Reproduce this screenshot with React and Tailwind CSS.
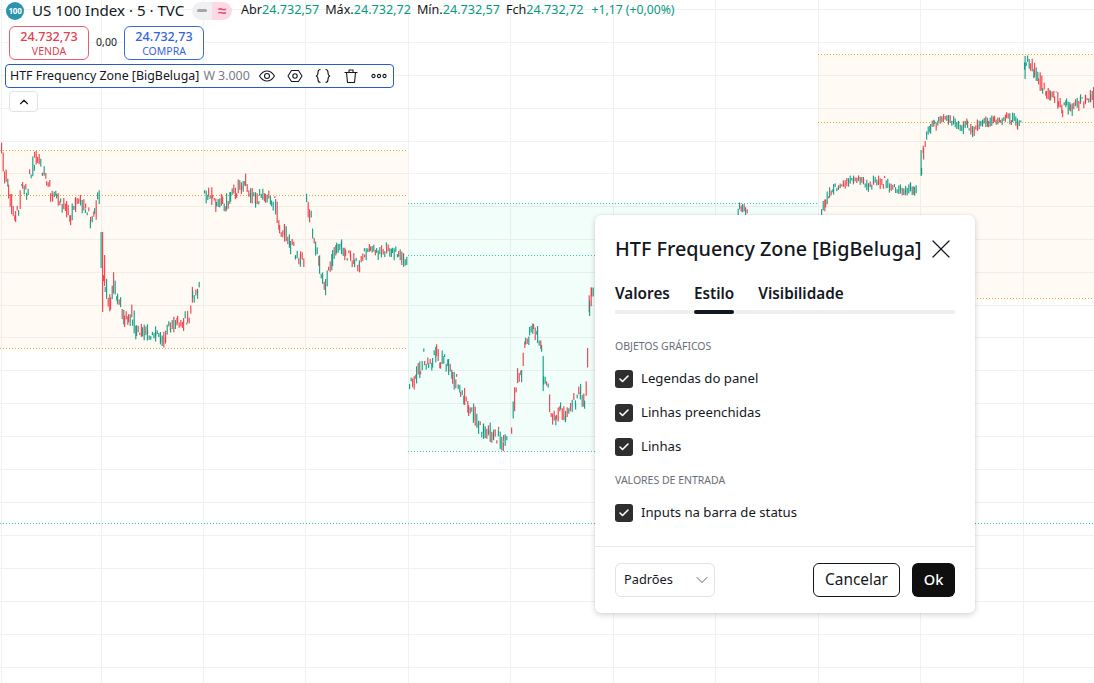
import React from 'react';
import { Check, ChevronDown, ChevronUp, X } from 'lucide-react';

const GREEN = '#089981';
const RED = '#f23645';

// price track for each session: [x, y] in screen pixels, gaps are where a new session opens
const sessions = [
  { amp: 11, track: [[1,156],[4,172],[8,192],[11,203],[15,216],[18,212],[22,186],[26,192],[29,178],[34,160],[37,157],[42,172],[46,182],[50,190],[52,200],[56,197],[60,202],[66,208],[70,216],[75,206],[80,200],[85,210],[90,219],[94,215],[97,202],[99,194]] },
  { amp: 14, track: [[103,272],[106,288],[110,300],[113,278],[117,298],[120,308],[124,318],[128,322],[132,314],[136,334],[142,331],[147,332],[155,334],[160,336],[165,340],[170,326],[177,323],[183,322],[187,318],[192,296],[197,290],[200,283]] },
  { amp: 13, track: [[204,195],[208,192],[212,198],[216,202],[222,198],[226,204],[230,194],[236,190],[241,186],[245,184],[250,196],[255,200],[259,195],[265,194],[271,200],[275,206],[279,222],[284,232],[290,244],[295,256],[300,258],[304,260]] },
  { amp: 10, track: [[306,200],[309,212],[312,228],[315,246],[319,262],[322,276],[325,286],[328,268],[332,260],[336,248],[341,246],[345,254],[350,258],[354,262],[359,266],[364,254],[370,250],[376,252],[381,250],[386,248],[392,252],[398,254],[403,258],[407,262]] },
  { amp: 15, track: [[409,388],[412,380],[416,378],[420,366],[424,356],[428,362],[432,364],[436,354],[440,358],[444,354],[448,370],[452,376],[456,380],[460,386],[464,396],[468,408],[473,414],[478,424],[483,432],[488,430],[493,436],[498,436],[503,442],[507,440]] },
  { amp: 11, track: [[511,420],[514,398],[517,376],[521,372],[525,345],[529,330],[533,328],[537,334],[541,342],[543,378],[546,388],[549,402],[552,416],[556,420],[560,408],[565,416],[570,404],[575,400],[580,394],[584,402],[587,350],[589,305],[591,292],[593,282]] },
  { amp: 6, track: [[736,214],[739,208],[742,207],[745,210],[748,214]] },
  { amp: 8, track: [[821,208],[825,202],[829,192],[833,190],[838,186],[843,184],[848,182],[853,178],[858,180],[863,183],[868,186],[873,181],[878,182],[884,182],[889,187],[895,188],[900,190],[905,190],[910,187],[914,188],[917,197]] },
  { amp: 7, track: [[921,165],[923,150],[926,136],[930,128],[934,124],[938,120],[943,118],[948,120],[953,122],[958,126],[963,128],[967,124],[972,130],[977,125],[982,122],[988,122],[994,120],[1000,120],[1006,117],[1012,118],[1017,122],[1021,126]] },
  { amp: 10, track: [[1024,66],[1027,62],[1030,64],[1034,70],[1038,76],[1042,86],[1046,90],[1050,95],[1054,96],[1058,101],[1062,108],[1066,104],[1070,110],[1075,105],[1080,101],[1085,100],[1090,98],[1093,98]] },
];

// the big opening bars that a smooth track can't produce
const openingBars = [
  { x: 100.5, open: 268, close: 232, top: 232, bottom: 268 },
  { x: 102, open: 232, close: 312, top: 232, bottom: 312 },
  { x: 104, open: 256, close: 285, top: 255, bottom: 286 },
  { x: 920.5, open: 176, close: 152, top: 150, bottom: 176 },
  { x: 1024.5, open: 78, close: 56, top: 56, bottom: 79 },
  { x: 1093, open: 88, close: 108, top: 87, bottom: 108 },
];

const buildBars = () => {
  let seed = 17;
  const rnd = () => {
    seed = (seed * 16807) % 2147483647;
    return seed / 2147483647;
  };
  const bars = [...openingBars];
  sessions.forEach(({ amp, track }) => {
    for (let i = 0; i < track.length - 1; i++) {
      const [x0, y0] = track[i];
      const [x1, y1] = track[i + 1];
      for (let x = x0; x < x1; x += 1.6) {
        const t = (x - x0) / (x1 - x0);
        const mid = y0 + (y1 - y0) * t;
        const slope = Math.abs(y1 - y0) / (x1 - x0);
        const open = mid + (rnd() - 0.5) * (amp + slope * 2);
        const close = mid + (rnd() - 0.5) * (amp + slope * 2);
        const top = Math.min(open, close) - rnd() * 3;
        const bottom = Math.max(open, close) + rnd() * 4;
        bars.push({ x, open, close, top, bottom });
      }
    }
  });
  return bars;
};

const bars = buildBars();
const vLines = [1, 101, 203, 305, 408, 510, 613, 715, 818, 920, 1023];
const hLines = [9, 42, 75, 108, 141, 173, 206, 239, 272, 305, 337, 370, 403, 436, 469, 502, 535, 568, 601, 634, 667];

const Chart = () => (
  <svg width="1094" height="683" className="absolute inset-0 block">
    {vLines.map((x) => <line key={x} x1={x + 0.5} x2={x + 0.5} y1="0" y2="683" stroke="#f1f1f3" />)}
    {hLines.map((y) => <line key={y} x1="0" x2="1094" y1={y + 0.5} y2={y + 0.5} stroke="#f1f1f3" />)}

    <rect x="0" y="150" width="408" height="198" fill="#ff9800" fillOpacity="0.045" />
    <rect x="408" y="203" width="410" height="248" fill="#00e5a0" fillOpacity="0.055" />
    <rect x="818" y="54" width="276" height="244" fill="#ff9800" fillOpacity="0.045" />

    {[[0, 408, 150], [0, 408, 195], [0, 408, 348], [818, 1094, 54], [818, 1094, 122], [818, 1094, 298]].map(([a, b, y]) => (
      <line key={`o${a}${y}`} x1={a} x2={b} y1={y + 0.5} y2={y + 0.5} stroke="#f5a623" strokeDasharray="1 2" />
    ))}
    {[[408, 818, 203], [408, 818, 255], [408, 818, 451], [0, 1094, 523]].map(([a, b, y]) => (
      <line key={`g${a}${y}`} x1={a} x2={b} y1={y + 0.5} y2={y + 0.5} stroke="#2ec4b0" strokeDasharray="1 2" />
    ))}

    {bars.map((b, i) => (
      <rect key={i} x={b.x} y={b.top} width="1.2" height={b.bottom - b.top} fill={b.close <= b.open ? GREEN : RED} fillOpacity="0.9" />
    ))}
  </svg>
);

const Val = ({ label, value }) => (
  <span className="flex">
    <span className="text-[#131722]">{label}</span>
    <span className="text-[#089981]">{value}</span>
  </span>
);

const Legend = () => (
  <div className="absolute left-0 top-0 flex flex-col items-start">
    <div className="flex h-[21px] items-center pl-[6px] whitespace-nowrap">
      <span className="flex h-[18px] w-[18px] items-center justify-center rounded-full bg-[#2b93ad] text-[8px] font-bold tracking-[-0.3px] text-white">100</span>
      <span className="ml-[8px] w-[153px] text-[15.1px] text-[#131722]">US 100 Index · 5 · TVC</span>
      <span className="ml-[7px] flex h-[18px] w-[40px] overflow-hidden rounded-[9px]">
        <span className="flex w-[20px] items-center justify-center bg-[#f0f0f2]">
          <span className="h-[3px] w-[10px] rounded-sm bg-[#a3a6af]" />
        </span>
        <span className="flex w-[20px] items-center justify-center bg-[#fcd9e4] text-[15px] font-bold leading-none text-[#e0527d]">≈</span>
      </span>
      <span className="ml-[9px] flex gap-[6px] text-[12.6px]">
        <Val label="Abr" value="24.732,57" />
        <Val label="Máx." value="24.732,72" />
        <Val label="Mín." value="24.732,57" />
        <Val label="Fch" value="24.732,72" />
        <span className="ml-[2px] text-[12.2px] text-[#089981]">+1,17 (+0,00%)</span>
      </span>
    </div>

    <div className="ml-[9px] mt-[5px] flex items-center">
      <div className="flex h-[34px] w-[80px] flex-col items-center justify-center rounded-md border border-[#e5606e] bg-white text-[#e0404f]">
        <span className="text-[12.6px] font-medium leading-[16px]">24.732,73</span>
        <span className="text-[10.5px] leading-[13px]">VENDA</span>
      </div>
      <span className="w-[35px] text-center text-[10.5px] text-[#131722]">0,00</span>
      <div className="flex h-[34px] w-[80px] flex-col items-center justify-center rounded-md border border-[#3f6ad8] bg-white text-[#3563e0]">
        <span className="text-[12.6px] font-medium leading-[16px]">24.732,73</span>
        <span className="text-[10.5px] leading-[13px]">COMPRA</span>
      </div>
    </div>

    <div className="ml-[5px] mt-[4px] flex h-[24px] w-[389px] items-center rounded-[4px] border border-[#2a5bc4] bg-white pl-[4px] whitespace-nowrap">
      <span className="text-[12.4px] text-[#131722]">HTF Frequency Zone [BigBeluga]</span>
      <span className="ml-[4px] text-[12.4px] text-[#787b86]">W 3.000</span>
      <div className="ml-[8px] flex items-center gap-[10px] text-[#131722]">
        <svg width="18" height="18" viewBox="0 0 18 18" fill="none" stroke="currentColor" strokeWidth="1.1">
          <path d="M1.5 9C4 5 6.5 4 9 4s5 1 7.500 5c-2.500 4-5 5-7.500 5s-5-1-7.500-5z" />
          <circle cx="9" cy="9" r="2.500" />
        </svg>
        <svg width="18" height="18" viewBox="0 0 18 18" fill="none" stroke="currentColor" strokeWidth="1.1">
          <path d="M5.500 3.500h7L16 9l-3.500 5.500h-7L2 9z" strokeLinejoin="round" />
          <circle cx="9" cy="9" r="2.200" />
        </svg>
        <svg width="18" height="18" viewBox="0 0 18 18" fill="none" stroke="currentColor" strokeWidth="1.1">
          <path d="M6.500 2.500c-2.500 0-2.500 1.500-2.500 3s0 3-2 3.500c2 .5 2 2 2 3.500s0 3 2.500 3" />
          <path d="M11.500 2.500c2.500 0 2.500 1.500 2.500 3s0 3 2 3.500c-2 .5-2 2-2 3.500s0 3-2.500 3" />
        </svg>
        <svg width="18" height="18" viewBox="0 0 18 18" fill="none" stroke="currentColor" strokeWidth="1.1">
          <path d="M2.500 5.500h13M7 5.500V3h4v2.500M4.500 5.500l1 10h7l1-10" strokeLinejoin="round" />
        </svg>
        <svg width="18" height="18" viewBox="0 0 18 18" fill="none" stroke="currentColor" strokeWidth="1.1">
          <circle cx="3.500" cy="9" r="1.600" />
          <circle cx="9" cy="9" r="1.600" />
          <circle cx="14.500" cy="9" r="1.600" />
        </svg>
      </div>
    </div>

    <button className="ml-[9px] mt-[3px] flex h-[21px] w-[29px] items-center justify-center rounded-[4px] border border-[#e0e3eb] bg-white text-[#131722]">
      <ChevronUp size={14} strokeWidth={2} />
    </button>
  </div>
);

const CheckRow = ({ label }) => (
  <label className="flex h-[18px] items-center gap-[8px]">
    <span className="flex h-[18px] w-[18px] items-center justify-center rounded-[3px] bg-[#2e2e2e] text-white">
      <Check size={12} strokeWidth={3.2} />
    </span>
    <span className="text-[13.2px] text-[#131722]">{label}</span>
  </label>
);

const SectionTitle = ({ children }) => (
  <div className="text-[10.5px] leading-[14px] text-[#6a6d78]">{children}</div>
);

const Dialog = () => (
  <div className="absolute left-[595px] top-[215px] flex h-[398px] w-[380px] flex-col rounded-md bg-white shadow-[0_2px_6px_rgba(0,0,0,0.16),0_0_2px_rgba(0,0,0,0.08)]">
    <div className="flex h-[67px] items-center justify-between pl-[20px] pr-[18px]">
      <span className="text-[19.8px] font-medium whitespace-nowrap text-[#131722]">HTF Frequency Zone [BigBeluga]</span>
      <X size={32} strokeWidth={0.95} className="text-[#131722]" />
    </div>
    <div className="relative mx-[20px] flex h-[32px] gap-[24px] border-b-[4px] border-[#f0f0f2] text-[15.3px] font-semibold text-[#131722]">
      <span className="leading-[23px]">Valores</span>
      <span className="relative leading-[23px]">
        Estilo
        <span className="absolute -bottom-[4px] left-0 h-[4px] w-full rounded-full bg-[#131722]" />
      </span>
      <span className="leading-[23px]">Visibilidade</span>
    </div>
    <div className="flex flex-1 flex-col px-[20px] pt-[25px]">
      <SectionTitle>OBJETOS GRÁFICOS</SectionTitle>
      <div className="mt-[17px] flex flex-col gap-[16px]">
        <CheckRow label="Legendas do panel" />
        <CheckRow label="Linhas preenchidas" />
        <CheckRow label="Linhas" />
      </div>
      <div className="mt-[17px]"><SectionTitle>VALORES DE ENTRADA</SectionTitle></div>
      <div className="mt-[17px]"><CheckRow label="Inputs na barra de status" /></div>
    </div>
    <div className="flex h-[67px] items-center justify-between border-t border-[#e6e8ee] px-[20px]">
      <div className="flex h-[34px] w-[100px] items-center justify-between rounded-md border border-[#e0e3eb] pl-[8px] pr-[2px] text-[12.8px] text-[#131722]">
        Padrões
        <ChevronDown size={20} strokeWidth={1.1} className="text-[#50535e]" />
      </div>
      <div className="flex gap-[12px]">
        <button className="h-[34px] w-[87px] rounded-md border border-[#131722] text-[15.4px] text-[#131722]">Cancelar</button>
        <button className="h-[34px] w-[43px] rounded-md bg-[#0f0f0f] text-[14.6px] font-medium text-white">Ok</button>
      </div>
    </div>
  </div>
);

export default function App() {
  return (
    <div className="relative h-[683px] w-[1094px] overflow-hidden bg-white font-['Noto_Sans','Liberation_Sans',sans-serif]">
      <Chart />
      <Legend />
      <Dialog />
    </div>
  );
}
